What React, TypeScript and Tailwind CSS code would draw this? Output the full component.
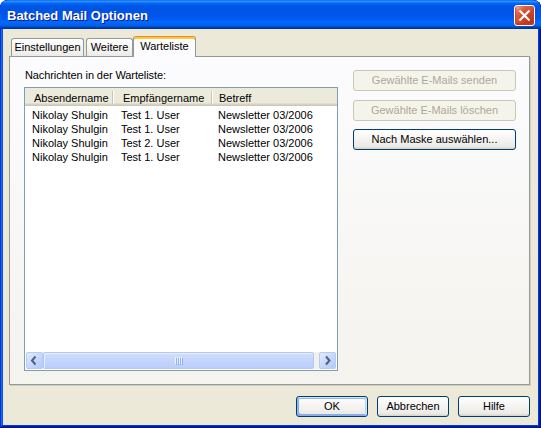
import React from "react";

const rows = [
  ["Nikolay Shulgin", "Test 1. User", "Newsletter 03/2006"],
  ["Nikolay Shulgin", "Test 1. User", "Newsletter 03/2006"],
  ["Nikolay Shulgin", "Test 2. User", "Newsletter 03/2006"],
  ["Nikolay Shulgin", "Test 1. User", "Newsletter 03/2006"],
];

function Chevron({ dir }: { dir: "l" | "r" }) {
  return (
    <svg width="15" height="15" viewBox="0 0 15 15">
      {dir === "l" ? (
        <polyline points="8.5,3.5 5,7.5 8.5,11.5" fill="none" stroke="#4D6185" strokeWidth="2" />
      ) : (
        <polyline points="6,3.5 9.5,7.5 6,11.5" fill="none" stroke="#4D6185" strokeWidth="2" />
      )}
    </svg>
  );
}

function SBtn({ dir }: { dir: "l" | "r" }) {
  return (
    <div className="w-[17px] h-[17px] shrink-0 rounded-[2px] border border-[#B8CBF5] bg-[linear-gradient(135deg,#E2EBFE,#C4D5FB_60%,#B4C9F6)] flex items-center justify-center">
      <Chevron dir={dir} />
    </div>
  );
}

export default function App() {
  const btn =
    "h-[21px] rounded-[3px] border flex items-center justify-center leading-[13px]";
  const enabled =
    "border-[#003C74] bg-[linear-gradient(180deg,#FFFFFF,#ECEBE6_86%,#D6D0C5)] text-black";
  const disabled = "border-[#C9C7BA] bg-[#F5F4EA] text-[#ACA899]";
  return (
    <div className="w-[541px] h-[428px] flex flex-col rounded-t-[8px] overflow-hidden bg-[#0855DD] shadow-[inset_-1px_-1px_#00138C,inset_1px_1px_#0831D9,inset_-2px_-2px_#001EA0,inset_2px_2px_#166AEE,inset_-3px_-3px_#003BDA,inset_3px_3px_#0855DD] font-['Liberation_Sans',Arial,sans-serif] text-[11px] text-black select-none">
      {/* Title bar */}
      <div className="h-[29px] shrink-0 flex items-start pl-[7px] pr-[6px] rounded-t-[8px] bg-[linear-gradient(180deg,#0058EE_0%,#3593FF_4%,#288EFF_6%,#127DFF_8%,#036FFC_10%,#0262EE_14%,#0057E5_20%,#0054E3_24%,#0055EB_56%,#005BF5_66%,#026AFE_76%,#0062EF_86%,#0052D6_92%,#0040AB_94%,#003092_100%)]">
        <div className="mt-[8px] text-[13px] leading-[16px] font-bold text-white [text-shadow:1px_1px_0_#0A1883]">
          Batched Mail Optionen
        </div>
        <div className="ml-auto mt-[5px] w-[21px] h-[21px] rounded-[3px] border border-white bg-[radial-gradient(circle_at_85%_85%,#B8301A_0%,#D4492C_50%,#DE6A4E_72%,#F2B4A2_90%,#FFFFFF_100%)] shadow-[inset_0_-1px_2px_1px_#C23A1E] flex items-center justify-center">
          <svg width="19" height="19" viewBox="0 0 19 19">
            <path d="M4.5 4.5 L14.5 14.5 M14.5 4.5 L4.5 14.5" stroke="#FFFFFF" strokeWidth="2.2" />
          </svg>
        </div>
      </div>

      {/* Client area */}
      <div className="flex-1 mx-[3px] mb-[3px] bg-[#ECE9D8] flex flex-col">
        {/* Tabs */}
        <div className="h-[27px] shrink-0 flex items-end pl-[8px]">
          <div className="w-[73px] h-[18px] border border-b-0 border-[#919B9C] rounded-t-[3px] bg-[linear-gradient(180deg,#FFFFFF,#ECEBE6)] flex items-start justify-center pt-[2px] leading-[13px]">
            Einstellungen
          </div>
          <div className="ml-[2px] w-[47px] h-[18px] border border-b-0 border-[#919B9C] rounded-t-[3px] bg-[linear-gradient(180deg,#FFFFFF,#ECEBE6)] flex items-start justify-center pt-[2px] leading-[13px]">
            Weitere
          </div>
          <div className="relative z-10 -mb-px w-[63px] h-[21px] border border-b-0 border-[#919B9C] border-t-[#E68B2C] rounded-t-[3px] bg-[#FCFCFE] shadow-[inset_0_2px_0_#FFC73C] flex items-start justify-center pt-[3px] leading-[13px]">
            Warteliste
          </div>
        </div>

        {/* Panel */}
        <div className="ml-[6px] w-[521px] h-[329px] shrink-0 border border-[#919B9C] shadow-[1px_1px_0_#D0CEBF] bg-[linear-gradient(180deg,#FCFCFE,#F4F3EE)] flex pl-[14px] pt-[11px]">
          {/* Left column */}
          <div className="w-[314px] flex flex-col">
            <div className="h-[14px] leading-[14px] pl-[1px] tracking-[-0.1px]">Nachrichten in der Warteliste:</div>
            <div className="mt-[5px] h-[284px] border border-[#7F9DB9] bg-white flex flex-col">
              {/* Header */}
              <div className="h-[18px] shrink-0 grid grid-cols-[89px_99px_1fr] bg-[#EBEADB] shadow-[inset_0_-1px_0_#CBC7B8,inset_0_-2px_0_#D6D2C2,inset_0_-3px_0_#E2DECD]">
                <div className="flex items-start">
                  <span className="flex-1 pl-[9px] mt-[2px] leading-[16px]">Absendername</span>
                  <span className="w-px h-[13px] mt-[3px] bg-[#C7C5B2]" />
                  <span className="w-px h-[13px] mt-[3px] bg-white" />
                </div>
                <div className="flex items-start">
                  <span className="flex-1 pl-[9px] mt-[2px] leading-[16px]">Empfängername</span>
                  <span className="w-px h-[13px] mt-[3px] bg-[#C7C5B2]" />
                  <span className="w-px h-[13px] mt-[3px] bg-white" />
                </div>
                <div className="pl-[6px] mt-[2px] leading-[16px]">Betreff</div>
              </div>
              {/* Rows */}
              <div className="pt-[2px] flex flex-col">
                {rows.map((r, i) => (
                  <div key={i} className="h-[14px] leading-[14px] grid grid-cols-[89px_99px_1fr] whitespace-nowrap">
                    <div className="pl-[7px]">{r[0]}</div>
                    <div className="pl-[7px]">{r[1]}</div>
                    <div className="pl-[5px]">{r[2]}</div>
                  </div>
                ))}
              </div>
              <div className="flex-1" />
              {/* Horizontal scrollbar */}
              <div className="shrink-0 px-[1px] pb-[1px]">
                <div className="h-[17px] flex bg-[#F3F1EC]">
                  <SBtn dir="l" />
                  <div className="flex-1 flex">
                    <div className="w-[271px] h-[17px] rounded-[2px] border border-[#B4C8F6] bg-[linear-gradient(180deg,#D2DEFD,#C5D6FC_50%,#BACDFA)] shadow-[inset_1px_1px_0_#E6EEFE] flex items-center justify-center gap-[1px]">
                      <span className="w-px h-[7px] bg-[#EEF4FE] shadow-[1px_1px_0_#8CB0F8]" />
                      <span className="w-px h-[7px] bg-[#EEF4FE] shadow-[1px_1px_0_#8CB0F8]" />
                      <span className="w-px h-[7px] bg-[#EEF4FE] shadow-[1px_1px_0_#8CB0F8]" />
                      <span className="w-px h-[7px] bg-[#EEF4FE] shadow-[1px_1px_0_#8CB0F8]" />
                    </div>
                  </div>
                  <SBtn dir="r" />
                </div>
              </div>
            </div>
          </div>

          {/* Right column */}
          <div className="ml-[15px] w-[163px] flex flex-col">
            <div className={`${btn} ${disabled} mt-[2px]`}>Gewählte E-Mails senden</div>
            <div className={`${btn} ${disabled} mt-[9px]`}>Gewählte E-Mails löschen</div>
            <div className={`${btn} ${enabled} mt-[8px]`}>Nach Maske auswählen...</div>
          </div>
        </div>

        {/* Bottom buttons */}
        <div className="mt-[11px] flex justify-end gap-[9px] pr-[8px]">
          <div className={`${btn} ${enabled} w-[72px] shadow-[inset_-1px_1px_#CEE7FF,inset_1px_2px_#98B8EA,inset_-2px_2px_#BCD4F6,inset_1px_-1px_#89ADE4,inset_2px_-2px_#89ADE4]`}>
            OK
          </div>
          <div className={`${btn} ${enabled} w-[72px]`}>Abbrechen</div>
          <div className={`${btn} ${enabled} w-[72px]`}>Hilfe</div>
        </div>
      </div>
    </div>
  );
}
